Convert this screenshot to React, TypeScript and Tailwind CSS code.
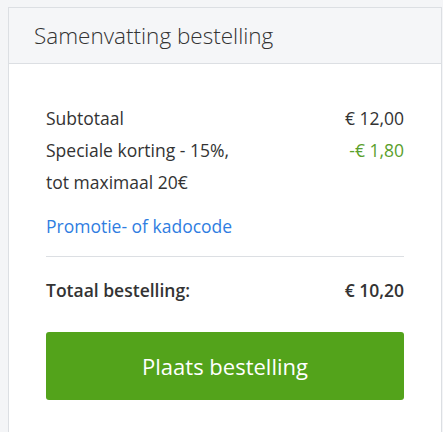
export default function App() {
  return (
    <div className="min-h-screen bg-[#f4f5f7] pl-2 pt-[7px] font-['Open_Sans',sans-serif] text-[#333]">
      <div className="w-[434px] border border-[#dcdfe3] bg-white">
        <div className="flex h-[56px] items-center border-b border-[#dcdfe3] bg-[#f5f6f8] px-[25px]">
          <h2 className="text-[22.5px] font-light leading-7 text-[#333]">Samenvatting bestelling</h2>
        </div>
        <div className="px-[37px] pb-8 pt-[38px] text-[17.5px] leading-8">
          <div className="flex justify-between">
            <span>Subtotaal</span>
            <span>€ 12,00</span>
          </div>
          <div className="flex justify-between">
            <span className="w-[200px]">Speciale korting - 15%, tot maximaal 20€</span>
            <span className="text-[#5aa02c]">-€ 1,80</span>
          </div>
          <a href="#" className="mt-3 block text-[#2f7de1]">
            Promotie- of kadocode
          </a>
          <div className="mt-[14px] border-t border-[#dcdfe3]" />
          <div className="mt-[17px] flex justify-between font-semibold">
            <span>Totaal bestelling:</span>
            <span>€ 10,20</span>
          </div>
          <button className="mt-[26px] h-[68px] w-full rounded-[3px] bg-[#53a31b] text-[22px] text-white">
            Plaats bestelling
          </button>
        </div>
      </div>
    </div>
  );
}
